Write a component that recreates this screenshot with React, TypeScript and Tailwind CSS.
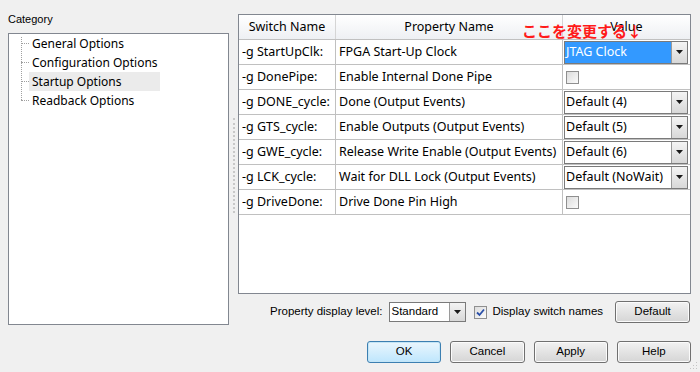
import type { ReactNode } from "react";

type Row = {
  sw: string;
  prop: string;
  value: { kind: "combo"; text: string; selected?: boolean } | { kind: "check" };
};

const rows: Row[] = [
  { sw: "-g StartUpClk:", prop: "FPGA Start-Up Clock", value: { kind: "combo", text: "JTAG Clock", selected: true } },
  { sw: "-g DonePipe:", prop: "Enable Internal Done Pipe", value: { kind: "check" } },
  { sw: "-g DONE_cycle:", prop: "Done (Output Events)", value: { kind: "combo", text: "Default (4)" } },
  { sw: "-g GTS_cycle:", prop: "Enable Outputs (Output Events)", value: { kind: "combo", text: "Default (5)" } },
  { sw: "-g GWE_cycle:", prop: "Release Write Enable (Output Events)", value: { kind: "combo", text: "Default (6)" } },
  { sw: "-g LCK_cycle:", prop: "Wait for DLL Lock (Output Events)", value: { kind: "combo", text: "Default (NoWait)" } },
  { sw: "-g DriveDone:", prop: "Drive Done Pin High", value: { kind: "check" } },
];

const categories = ["General Options", "Configuration Options", "Startup Options", "Readback Options"];

function Arrow() {
  return (
    <div className="flex h-full w-[16px] items-center justify-center border-l border-[#9a9a9a] bg-gradient-to-b from-[#f4f4f4] to-[#d8d8d8]">
      <svg width="7" height="4" viewBox="0 0 7 4">
        <path d="M0 0h7L3.5 4z" fill="#1a1a1a" />
      </svg>
    </div>
  );
}

function CheckBox({ checked }: { checked?: boolean }) {
  return (
    <div className="flex h-[13px] w-[13px] items-center justify-center border border-[#8f8f8f] bg-gradient-to-br from-[#dcdcdc] to-[#fbfbfb]">
      {checked && (
        <svg width="9" height="9" viewBox="0 0 9 9">
          <path d="M1 4.5l2.5 2.5L8 1.5" stroke="#2a4fa8" strokeWidth="1.8" fill="none" />
        </svg>
      )}
    </div>
  );
}

function Button({ children, focused }: { children: ReactNode; focused?: boolean }) {
  return (
    <div
      className={
        focused
          ? "flex h-[22px] w-[75px] items-center justify-center rounded-[3px] border border-[#3c7fb1] bg-gradient-to-b from-[#eaf6fd] to-[#bee6fd] shadow-[inset_0_0_0_1px_#c4e5f6]"
          : "flex h-[22px] w-[75px] items-center justify-center rounded-[3px] border border-[#707070] bg-gradient-to-b from-[#f2f2f2] to-[#d5d5d5] shadow-[inset_0_0_0_1px_#fbfbfb]"
      }
    >
      {children}
    </div>
  );
}

export default function App() {
  return (
    <div className="relative flex h-[372px] w-[700px] overflow-hidden bg-[#f0f0f0] text-[12px] text-black [font-family:'Noto_Sans',sans-serif]">
      {/* Category tree */}
      <div className="ml-[8px] flex w-[221px] flex-col">
        <div className="mt-[12px] h-[21px] text-[11px] leading-[14px] [font-family:'Liberation_Sans',sans-serif]">Category</div>
        <div className="relative h-[292px] border border-[#828790] bg-white">
          <div className="absolute left-[12px] top-[3px] h-[63px] border-l border-dotted border-[#a0a0a0]" />
          {categories.map((c) => (
            <div key={c} className="flex h-[19px] items-center">
              <div className="ml-[12px] w-[8px] border-t border-dotted border-[#a0a0a0]" />
              <div
                className={
                  c === "Startup Options"
                    ? "flex h-[19px] w-[131px] items-center bg-[#ebebeb] pl-[3px] leading-none"
                    : "flex h-[19px] items-center pl-[3px] leading-none"
                }
              >
                {c}
              </div>
            </div>
          ))}
        </div>
      </div>

      {/* Splitter */}
      <div className="flex w-[9px] justify-center">
        <div className="mt-[118px] h-[95px] w-[2px] border-l-2 border-dotted border-[#c8c8c8]" />
      </div>

      {/* Right side */}
      <div className="flex w-[453px] flex-col pt-[14px]">
        <div className="relative h-[280px] border border-[#828790] bg-white text-[12.5px]">
          <div className="flex h-[25px] border-b border-[#c0c0c0] bg-gradient-to-b from-[#ffffff] to-[#eef0f3]">
            <div className="flex w-[97px] items-center justify-center border-r border-[#d5d5d5]">Switch Name</div>
            <div className="flex w-[227px] items-center justify-center border-r border-[#d5d5d5]">Property Name</div>
            <div className="flex flex-1 items-center justify-center">Value</div>
          </div>
          {rows.map((r) => (
            <div key={r.sw} className="flex h-[25px] border-b border-[#c0c0c0]">
              <div className="flex w-[97px] items-center border-r border-[#c0c0c0] pl-[3px] whitespace-nowrap">{r.sw}</div>
              <div className="flex w-[227px] items-center border-r border-[#c0c0c0] pl-[3px] whitespace-nowrap">{r.prop}</div>
              <div className="flex flex-1 items-center pl-[1px] pr-[2px]">
                {r.value.kind === "combo" ? (
                  <div className="flex h-[23px] w-full border border-[#7a7a7a] bg-white">
                    <div
                      className={
                        r.value.selected
                          ? "flex flex-1 items-center bg-[#3399ff] pl-[1px] text-white whitespace-nowrap"
                          : "flex flex-1 items-center pl-[1px] whitespace-nowrap"
                      }
                    >
                      {r.value.text}
                    </div>
                    <Arrow />
                  </div>
                ) : (
                  <div className="ml-[2px]">
                    <CheckBox />
                  </div>
                )}
              </div>
            </div>
          ))}
          {/* annotation */}
          <div className="absolute left-[283px] top-[6px] text-[15px] font-bold leading-[20px] text-[#ff1a1a] [font-family:'Noto_Sans_CJK_JP',sans-serif]">
            ここを変更する↓
          </div>
        </div>

        <div className="mt-[7px] flex h-[22px] items-center text-[11.5px] [font-family:'Liberation_Sans',sans-serif]">
          <div className="ml-[32px]">Property display level:</div>
          <div className="ml-[6px] flex h-[20px] w-[77px] border border-[#7a7a7a] bg-white">
            <div className="flex flex-1 items-center pl-[2px]">Standard</div>
            <Arrow />
          </div>
          <div className="ml-[8px]">
            <CheckBox checked />
          </div>
          <div className="ml-[6px]">Display switch names</div>
          <div className="ml-[12px]">
            <Button>Default</Button>
          </div>
        </div>

        <div className="mt-[18px] flex h-[22px] gap-[9px] pl-[129px] text-[11.5px] [font-family:'Liberation_Sans',sans-serif]">
          <Button focused>OK</Button>
          <Button>Cancel</Button>
          <Button>Apply</Button>
          <Button>Help</Button>
        </div>
      </div>

      {/* size grip */}
      <svg className="absolute bottom-[2px] right-[2px]" width="9" height="9" viewBox="0 0 9 9">
        <g fill="#c4c4c4">
          <rect x="7" y="1" width="1" height="1" />
          <rect x="4" y="4" width="1" height="1" />
          <rect x="7" y="4" width="1" height="1" />
          <rect x="1" y="7" width="1" height="1" />
          <rect x="4" y="7" width="1" height="1" />
          <rect x="7" y="7" width="1" height="1" />
        </g>
      </svg>
    </div>
  );
}
